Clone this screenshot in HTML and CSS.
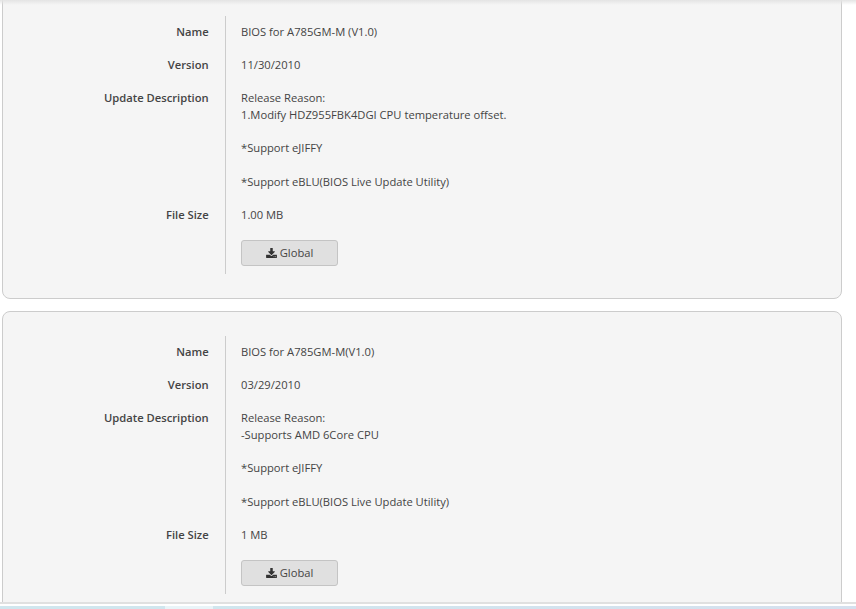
FILE: index.html
```html
<!DOCTYPE html>
<html lang="en">
<head>
<meta charset="utf-8">
<title>BIOS downloads</title>
<link rel="stylesheet" href="styles.css">
</head>
<body>
<div class="page">
  <main class="list">
    <section class="card card-first">
      <div class="table">
        <div class="row"><div class="label">Name</div><div class="value">BIOS for A785GM-M (V1.0)</div></div>
        <div class="row"><div class="label">Version</div><div class="value">11/30/2010</div></div>
        <div class="row"><div class="label">Update Description</div><div class="value">Release Reason:<br>1.Modify HDZ955FBK4DGI CPU temperature offset.<br><br>*Support eJIFFY<br><br>*Support eBLU(BIOS Live Update Utility)</div></div>
        <div class="row"><div class="label">File Size</div><div class="value">1.00 MB</div></div>
        <div class="row"><div class="label"></div><div class="value value-action"><a class="btn" href="#"><svg class="icon" viewBox="0 0 1664 1536" aria-hidden="true"><path d="M1280 1344q0-26-19-45t-45-19-45 19-19 45 19 45 45 19 45-19 19-45zm256 0q0-26-19-45t-45-19-45 19-19 45 19 45 45 19 45-19 19-45zm128-224v320q0 40-28 68t-68 28h-1472q-40 0-68-28t-28-68v-320q0-40 28-68t68-28h465l135 136q58 56 136 56t136-56l136-136h464q40 0 68 28t28 68zm-325-569q17 41-14 70l-448 448q-18 19-45 19t-45-19l-448-448q-31-29-14-70 17-39 59-39h256v-448q0-26 19-45t45-19h256q26 0 45 19t19 45v448h256q42 0 59 39z"/></svg> Global</a></div></div>
      </div>
    </section>
    <section class="card">
      <div class="table">
        <div class="row"><div class="label">Name</div><div class="value">BIOS for A785GM-M(V1.0)</div></div>
        <div class="row"><div class="label">Version</div><div class="value">03/29/2010</div></div>
        <div class="row"><div class="label">Update Description</div><div class="value">Release Reason:<br>-Supports AMD 6Core CPU<br><br>*Support eJIFFY<br><br>*Support eBLU(BIOS Live Update Utility)</div></div>
        <div class="row"><div class="label">File Size</div><div class="value">1 MB</div></div>
        <div class="row"><div class="label"></div><div class="value value-action"><a class="btn" href="#"><svg class="icon" viewBox="0 0 1664 1536" aria-hidden="true"><path d="M1280 1344q0-26-19-45t-45-19-45 19-19 45 19 45 45 19 45-19 19-45zm256 0q0-26-19-45t-45-19-45 19-19 45 19 45 45 19 45-19 19-45zm128-224v320q0 40-28 68t-68 28h-1472q-40 0-68-28t-28-68v-320q0-40 28-68t68-28h465l135 136q58 56 136 56t136-56l136-136h464q40 0 68 28t28 68zm-325-569q17 41-14 70l-448 448q-18 19-45 19t-45-19l-448-448q-31-29-14-70 17-39 59-39h256v-448q0-26 19-45t45-19h256q26 0 45 19t19 45v448h256q42 0 59 39z"/></svg> Global</a></div></div>
      </div>
    </section>
  </main>
  <div class="strip"><div class="tint"></div><div class="tint-light"></div><div class="tint-wide"></div></div>
</div>
</body>
</html>
```
FILE: styles.css
```css
* { box-sizing: border-box; }
html, body { margin: 0; height: 100%; overflow: hidden; background: #fff; }
body { font-family: "Open Sans", sans-serif; font-size: 11.2px; line-height: 16.8px; color: #444; }
.page { height: 100vh; display: flex; flex-direction: column; }
.list { flex: 1; min-height: 0; overflow: hidden; padding: 0 14px 0 2px; position: relative; display: flex; flex-direction: column; gap: 12px; }
.list::before { content: ""; position: absolute; left: 0; right: 0; top: 0; height: 5px; background: linear-gradient(#e4e4e4, rgba(228,228,228,0)); }
.card { flex: none; background: #f5f5f5; border: 1px solid #ccc; border-radius: 8px; padding: 24px 0; }
.card-first { margin-top: -8.6px; }
.row { display: flex; }
.label { width: 223px; flex: none; padding: 8px 16.4px 8px 0; text-align: right; font-weight: 600; border-right: 1px solid #ccc; }
.value { padding: 8px 15px; flex: 1; }
.value-action { padding-top: 8.6px; }
.btn { display: flex; align-items: center; justify-content: center; gap: 3px; width: 97px; height: 26px; background: #e0e0e0; border: 1px solid #c4c4c4; border-radius: 3px; color: #444; text-decoration: none; }
.icon { width: 11px; height: 10px; fill: #333; }
.strip { flex: none; height: 7px; padding-top: 2px; border-top: 2px solid #e0e0e0; display: flex; }
.tint { width: 165px; background: #d0e6ee; }
.tint-light { width: 48px; background: #e9f4f8; }
.tint-wide { flex: 1; background: linear-gradient(90deg, #d0e6ee, #d5e0ee); }
```
